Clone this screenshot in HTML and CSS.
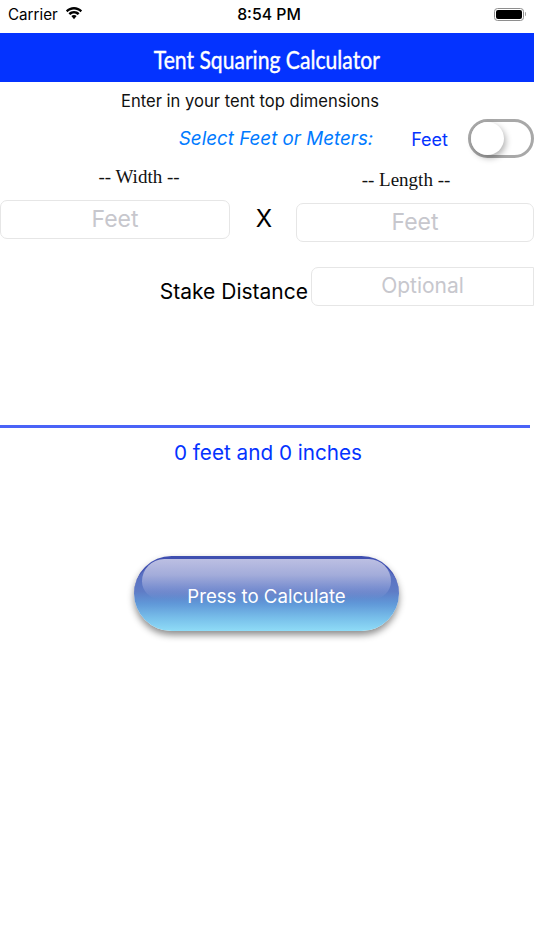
FILE: index.html
```html
<!DOCTYPE html>
<html lang="en">
<head>
    <meta charset="UTF-8">
    <meta name="viewport" content="width=device-width, initial-scale=1.0">
    <title>Tent Squaring Calculator</title>
    <link rel="stylesheet" href="styles.css">
</head>
<body>
    <!-- Status Bar -->
    <div class="status-bar">
        <div class="status-left">
            <span class="carrier">Carrier</span>
            <svg class="wifi" width="18" height="13" viewBox="0 0 18 13">
                <path d="M9 2.600c2.500 0 4.800 1 6.500 2.600l1.600-1.700C15 1.400 12.100 .1 9 .1S3 1.400 .9 3.500l1.600 1.700C4.200 3.600 6.500 2.600 9 2.600z" fill="#000"/>
                <path d="M9 6.500c1.400 0 2.800 .6 3.800 1.500l1.700-1.700C13 4.900 11.100 4.100 9 4.100s-4 .8-5.500 2.200l1.700 1.700C6.200 7.100 7.600 6.500 9 6.500z" fill="#000"/>
                <path d="M9 8.100c-1 0-1.900 .4-2.600 1L9 12.200l2.600-3.100C10.900 8.500 10 8.100 9 8.100z" fill="#000"/>
            </svg>
        </div>
        <span class="clock">8:54 PM</span>
        <div class="battery">
            <div class="battery-fill"></div>
        </div>
    </div>

    <!-- Header -->
    <div class="header">
        <h1 class="title-text">Tent Squaring Calculator</h1>
    </div>

    <p class="intro">Enter in your tent top dimensions</p>

    <div class="unit-row">
        <span class="unit-label">Select Feet or Meters:</span>
        <span class="unit-value">Feet</span>
        <div class="switch"><div class="switch-knob"></div></div>
    </div>

    <!-- Dimensions -->
    <div class="dimensions">
        <div class="dim-col width-col">
            <div class="dim-label">-- Width --</div>
            <input class="field" type="text" placeholder="Feet">
        </div>
        <div class="times">X</div>
        <div class="dim-col length-col">
            <div class="dim-label">-- Length --</div>
            <input class="field" type="text" placeholder="Feet">
        </div>
    </div>

    <div class="stake-row">
        <span class="stake-label">Stake Distance</span>
        <input class="field optional" type="text" placeholder="Optional">
    </div>

    <div class="divider"></div>
    <div class="result">0 feet and 0 inches</div>

    <div class="button-row">
        <button class="calc-btn"><span class="calc-text">Press to Calculate</span></button>
    </div>
</body>
</html>
```

FILE: styles.css
```css
/* Global Styles */
body, html {
    margin: 0;
    padding: 0;
    height: 100%;
    background-color: #fff;
    font-family: Inter, 'Liberation Sans', sans-serif;
    color: #000;
}

body {
    overflow: hidden;
}

/* Status Bar */
.status-bar {
    height: 33px;
    display: flex;
    justify-content: space-between;
    align-items: center;
    padding: 0 10px 5px 8px;
    box-sizing: border-box;
    position: relative;
}

.status-left {
    display: flex;
    align-items: center;
    gap: 7px;
}

.carrier {
    font-size: 15.200px;
}

.wifi {
    margin-top: -2px;
}

.clock {
    position: absolute;
    left: 4px;
    right: 0;
    top: 5px;
    text-align: center;
    font-size: 15.800px;
    font-weight: 500;
}

.battery {
    width: 26px;
    height: 9px;
    border: 1px solid #8e8e8e;
    border-radius: 3.500px;
    padding: 1px;
    position: relative;
}

.battery::after {
    content: "";
    position: absolute;
    right: -3px;
    top: 3px;
    width: 1.500px;
    height: 4px;
    background-color: #a5a5a5;
    border-radius: 0 1px 1px 0;
}

.battery-fill {
    width: 100%;
    height: 100%;
    background-color: #000;
    border-radius: 2px;
}

/* Header */
.header {
    height: 49px;
    background-color: #0433ff;
    display: flex;
    justify-content: center;
    align-items: center;
    padding-top: 2px;
    box-sizing: border-box;
}

.title-text {
    margin: 0;
    font-family: Lato, 'Liberation Sans', sans-serif;
    font-size: 25px;
    font-weight: normal;
    color: #fff;
    transform: scaleX(0.845);
    -webkit-text-stroke: 0.400px #fff;
}

.intro {
    margin: 0;
    width: 500px;
    height: 38px;
    line-height: 38px;
    text-align: center;
    font-size: 16.600px;
    color: #111;
}

/* Feet / Meters */
.unit-row {
    display: flex;
    align-items: center;
    justify-content: flex-end;
    height: 39px;
    margin-top: -1px;
}

.unit-label {
    font-size: 18.800px;
    font-style: italic;
    color: #007aff;
    margin-right: 38px;
}

.unit-value {
    font-size: 18px;
    color: #0433ff;
    margin-right: 20px;
    padding-top: 2px;
}

.switch {
    width: 66px;
    height: 39px;
    box-sizing: border-box;
    border: 3px solid #a8a8a8;
    border-radius: 20px;
    background-color: #fff;
}

.switch-knob {
    width: 33px;
    height: 33px;
    border-radius: 50%;
    background-color: #fff;
    box-shadow: 2px 3px 6px rgba(0, 0, 0, 0.3);
}

/* Dimensions */
.dimensions {
    display: flex;
    margin-top: 7px;
}

.dim-col {
    display: flex;
    flex-direction: column;
}

.width-col {
    width: 230px;
}

.length-col {
    width: 238px;
    padding-top: 3px;
}

.dim-label {
    height: 35px;
    font-family: 'Liberation Serif', serif;
    font-size: 19px;
    line-height: 24px;
    text-align: center;
    color: #111;
}

.width-col .dim-label {
    padding-left: 48px;
}

.length-col .dim-label {
    padding-right: 18px;
}

.times {
    width: 66px;
    height: 38px;
    margin-top: 35px;
    padding-left: 2px;
    box-sizing: border-box;
    text-align: center;
    font-size: 24px;
    line-height: 38px;
}

.field {
    display: block;
    height: 39px;
    width: 100%;
    box-sizing: border-box;
    border: 1px solid #e6e6e6;
    border-radius: 7px;
    padding: 0 0 2px;
    margin: 0;
    text-align: center;
    font-family: inherit;
    font-size: 23px;
    background-color: #fff;
}

.field::placeholder {
    color: #c7c7cd;
    opacity: 1;
}

/* Stake Distance */
.stake-row {
    display: flex;
    justify-content: flex-end;
    margin-top: 25px;
}

.stake-label {
    font-size: 21px;
    line-height: 26px;
    margin-top: 12px;
    margin-right: 3px;
}

.field.optional {
    width: 223px;
    font-size: 21px;
    border-radius: 7px 0 0 7px;
}

/* Result */
.divider {
    width: 530px;
    height: 3px;
    background-color: #4a63f7;
    margin-top: 119px;
}

.result {
    width: 536px;
    text-align: center;
    font-size: 20.700px;
    line-height: 26px;
    color: #0433ff;
    margin-top: 12px;
}

/* Calculate Button */
.button-row {
    display: flex;
    margin-top: 90px;
    padding-left: 134px;
}

.calc-btn {
    width: 265px;
    height: 75px;
    padding: 2px 0 0;
    border: none;
    border-top: 3px solid #3f4fb0;
    border-radius: 38px;
    color: #fff;
    font-family: inherit;
    font-size: 18.600px;
    position: relative;
    background: linear-gradient(to bottom, #5566bd 0%, #5f7cc6 45%, #6098d8 62%, #78bfea 82%, #8fdcf7 100%);
    box-shadow: 0 4px 7px rgba(0, 0, 0, 0.45);
}

/* glossy highlight over the top half */
.calc-btn::before {
    content: "";
    position: absolute;
    left: 8px;
    right: 8px;
    top: 0;
    height: 40px;
    border-radius: 30px 30px 24px 24px;
    background: linear-gradient(to bottom, #bcbfe2 0%, #a3acda 40%, rgba(130, 150, 212, 0.7) 75%, rgba(100, 130, 205, 0) 100%);
}

.calc-text {
    position: relative;
}
```
